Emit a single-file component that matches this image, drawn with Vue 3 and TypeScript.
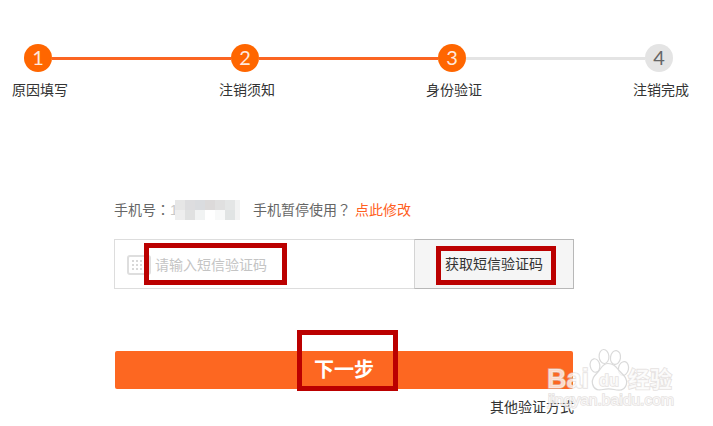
<script setup lang="ts">
import { ref } from 'vue'

interface Step {
  title: string
  done: boolean
}

const steps: Step[] = [
  { title: '原因填写', done: true },
  { title: '注销须知', done: true },
  { title: '身份验证', done: true },
  { title: '注销完成', done: false },
]

const code = ref('')

// shades of the blocks that hide the phone number, row by row
const mosaic = [
  '#e6e6e6', '#dddddf', '#dadcdf', '#dcdada', '#e0e0e0', '#e4e6e6', '#f2f3f3',
  '#eeeeee', '#e0e1e1', '#f1f3f3', '#ffffff', '#f8f9f9', '#e1e4e4', '#f3f3f3',
]

const keypadDots = [0, 1, 2].flatMap((row) => [0, 1, 2].map((col) => ({ x: 5 + col * 4, y: 5 + row * 4 })))
</script>

<template>
  <main class="page">
    <ol class="steps">
      <li
        v-for="(step, index) in steps"
        :key="step.title"
        class="steps__item"
        :class="{ 'steps__item--done': step.done }"
      >
        <div class="steps__track">
          <span class="steps__number">{{ index + 1 }}</span>
          <span
            v-if="index < steps.length - 1"
            class="steps__line"
            :class="{ 'steps__line--done': steps[index + 1].done }"
          />
        </div>
        <span class="steps__title">{{ step.title }}</span>
      </li>
    </ol>

    <form class="verify" @submit.prevent>
      <p class="verify__phone">
        <span>手机号<span class="verify__mark">：</span></span>
        <span class="verify__number">
          <span class="verify__digit">1</span>
          <span class="verify__mosaic">
            <i v-for="(shade, index) in mosaic" :key="index" :style="{ background: shade }" />
          </span>
        </span>
        <span>手机暂停使用<span class="verify__mark">？</span></span>
        <a class="verify__link" href="#">点此修改</a>
      </p>

      <div class="verify__row">
        <label class="verify__field">
          <svg class="verify__icon" width="24" height="20" viewBox="0 0 24 20">
            <rect x="1" y="1" width="22" height="18" rx="2" fill="#fff" stroke="#dedede" stroke-width="2" />
            <rect
              v-for="dot in keypadDots"
              :key="`${dot.x}-${dot.y}`"
              :x="dot.x"
              :y="dot.y"
              width="2"
              height="2"
              fill="#d8d8d8"
            />
          </svg>
          <input v-model="code" class="verify__input" type="text" placeholder="请输入短信验证码" />
        </label>
        <button class="verify__send" type="button">获取短信验证码</button>
      </div>

      <button class="verify__submit" type="submit">下一步</button>
      <a class="verify__other" href="#">其他验证方式</a>
    </form>

    <span class="mark mark--input" />
    <span class="mark mark--send" />
    <span class="mark mark--submit" />

    <svg class="watermark" width="140" height="70" viewBox="0 0 140 70">
      <g class="watermark__shape">
        <ellipse cx="54" cy="22.500" rx="4.800" ry="6.800" transform="rotate(-10 54 22.5)" />
        <ellipse cx="63" cy="13.500" rx="4.900" ry="7" transform="rotate(-4 63 13.5)" />
        <ellipse cx="74.500" cy="14.500" rx="5" ry="7" transform="rotate(8 74.5 14.5)" />
        <ellipse cx="82.500" cy="25.500" rx="5" ry="7" transform="rotate(12 82.5 25.5)" />
        <path d="M67 20.500C61 20.500 60.500 25.500 57 29C53 33 50.500 36 51.500 41C53 47 58 47.500 62 46.500C66 45.500 69 45.500 73 46.500C79 48 84 47 85.500 41C86.500 36 83.500 33 79.500 29C75.500 25 74 20.500 67 20.500Z" />
      </g>
      <g class="watermark__text">
        <text x="6" y="45" font-size="28" textLength="42" lengthAdjust="spacingAndGlyphs">Bai</text>
        <text x="58" y="42.500" font-size="17" textLength="20" lengthAdjust="spacingAndGlyphs">du</text>
        <text x="87" y="43.500" font-size="22" textLength="44">经验</text>
        <text class="watermark__url" x="7" y="62" font-size="14" textLength="126" lengthAdjust="spacingAndGlyphs">jingyan.baidu.com</text>
      </g>
    </svg>
  </main>
</template>

<style>
body {
  margin: 0;
  background: #ffffff;
}
</style>

<style scoped>
.page {
  position: relative;
  box-sizing: border-box;
  width: 713px;
  height: 426px;
  padding-top: 44px;
  overflow: hidden;
  background: #ffffff;
  color: #333333;
  font-family: 'Liberation Sans', 'Noto Sans CJK SC', sans-serif;
  font-size: 14px;
  line-height: 20px;
}

.steps {
  display: flex;
  margin: 0;
  padding: 0 0 0 12px;
  list-style: none;
}

.steps__item {
  flex: 0 0 207px;
}

.steps__item:last-child {
  flex-basis: 60px;
}

.steps__track {
  display: flex;
  align-items: center;
  height: 28px;
  padding-left: 12px;
  margin-right: -12px;
}

.steps__number {
  flex: 0 0 28px;
  height: 28px;
  border-radius: 50%;
  background: #e4e4e4;
  color: #666666;
  font-family: Lato, sans-serif;
  font-size: 20px;
  font-weight: 400;
  line-height: 27px;
  text-align: center;
}

.steps__item--done .steps__number {
  background: #ff6600;
  color: #ffe8dc;
}

.steps__line {
  flex: 1;
  height: 3px;
  margin-top: 1px;
  background: #e4e4e4;
}

.steps__line--done {
  background: #fb6522;
}

.steps__title {
  display: block;
  margin-top: 8px;
}

.verify {
  display: flex;
  flex-direction: column;
  width: 460px;
  margin: 100px 0 0 114px;
}

.verify__phone {
  display: flex;
  height: 20px;
  margin: 0;
  color: #666666;
}

.verify__mark {
  font-family: 'Noto Sans CJK TC', sans-serif;
  line-height: 1;
}

.verify__number {
  display: flex;
  align-items: center;
  width: 83px;
}

.verify__digit {
  width: 8px;
  margin-right: -3px;
  color: #c8c8c8;
}

.verify__mosaic {
  position: relative;
  display: grid;
  grid-template-columns: repeat(6, 10px) 5px;
  grid-auto-rows: 10px;
}

.verify__link {
  margin-left: 4px;
  color: #ff6022;
  text-decoration: none;
}

.verify__row {
  display: flex;
  height: 50px;
  margin-top: 19px;
}

.verify__field {
  display: flex;
  box-sizing: border-box;
  align-items: center;
  width: 300px;
  padding-left: 12px;
  border: 1px solid #dddddd;
  border-right: 0;
}

.verify__icon {
  flex-shrink: 0;
  margin-top: 2px;
}

.verify__input {
  width: 240px;
  margin-left: 4px;
  padding: 2px 0 0;
  border: 0;
  outline: 0;
  background: transparent;
  font: inherit;
}

.verify__input::placeholder {
  color: #c4c4c4;
  opacity: 1;
}

.verify__send {
  width: 160px;
  padding: 0;
  border: 1px solid #b8b8b8;
  border-left-color: #d4d4d4;
  background: #f5f5f5;
  color: #333333;
  font: inherit;
}

.verify__submit {
  height: 38px;
  margin: 62px 1px 0;
  padding: 0;
  border: 0;
  border-radius: 2px;
  background: #fd6721;
  color: #ffffff;
  font: inherit;
  font-size: 20px;
  font-weight: 700;
}

.verify__other {
  align-self: flex-end;
  margin-top: 8px;
  color: #333333;
  text-decoration: none;
}

.mark {
  position: absolute;
  box-sizing: border-box;
  border: 5px solid #bb0000;
  pointer-events: none;
}

.mark--input {
  top: 243px;
  left: 144px;
  width: 143px;
  height: 42px;
}

.mark--send {
  top: 246px;
  left: 436px;
  width: 120px;
  height: 39px;
}

.mark--submit {
  top: 330px;
  left: 297px;
  width: 101px;
  height: 61px;
}

.watermark {
  position: absolute;
  top: 343px;
  left: 541px;
  pointer-events: none;
}

.watermark__shape {
  fill: rgba(255, 255, 255, 0.65);
  stroke: #dadada;
  stroke-width: 1.2;
}

.watermark__text {
  fill: rgba(255, 255, 255, 0.75);
  stroke: rgba(212, 206, 203, 0.6);
  stroke-width: 1.6;
  paint-order: stroke;
  font-family: 'Liberation Sans', 'Noto Sans CJK SC', sans-serif;
  font-weight: 700;
}

.watermark__url {
  stroke-width: 1.4;
  font-weight: 400;
}
</style>
